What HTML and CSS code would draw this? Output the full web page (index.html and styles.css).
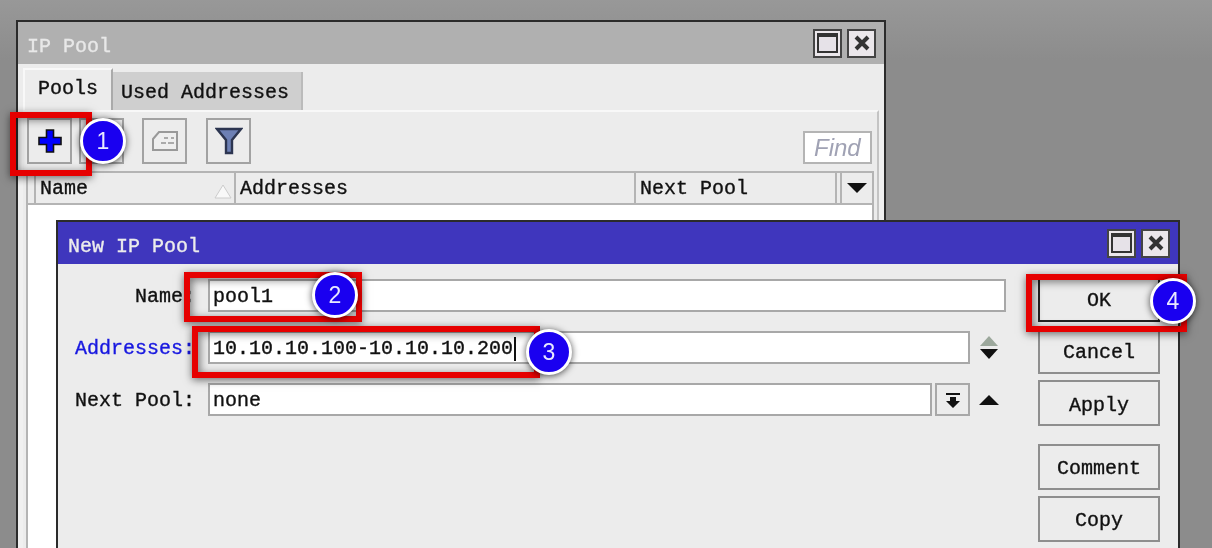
FILE: index.html
```html
<!DOCTYPE html>
<html lang="en">
<head>
  <meta charset="UTF-8">
  <meta name="viewport" content="width=device-width, initial-scale=1.0">
  <title>New IP Pool</title>
  <link rel="stylesheet" href="styles.css">
</head>
<body>
  <div class="desktop">

    <!-- IP Pool list window -->
    <section class="window pool-window">
      <header class="titlebar">
        <span class="title">IP Pool</span>
        <div class="win-buttons">
          <button class="win-btn"><span class="max-glyph"></span></button>
          <button class="win-btn">
            <svg width="18" height="18" viewBox="0 0 18 18"><path d="M3 3 L15 15 M15 3 L3 15" stroke="#333" stroke-width="4"/></svg>
          </button>
        </div>
      </header>

      <div class="tabs">
        <div class="tab active">Pools</div>
        <div class="tab">Used Addresses</div>
      </div>

      <div class="pane">
        <div class="toolbar">
          <button class="tool">
            <svg width="26" height="26" viewBox="0 0 26 26"><path d="M9.5 2 H16.5 V9.5 H24 V16.5 H16.5 V24 H9.5 V16.5 H2 V9.5 H9.5 Z" fill="#0000ff" stroke="#111" stroke-width="1.6"/></svg>
          </button>
          <button class="tool"></button>
          <button class="tool tool-gap">
            <svg width="28" height="24" viewBox="0 0 28 24"><path d="M2 10 L8 3 H26 V21 H2 Z" fill="#eee" stroke="#999" stroke-width="2"/><path d="M13 9 H17 M20 9 H23 M10 14 H15 M17 14 H23" stroke="#aaa" stroke-width="2"/></svg>
          </button>
          <button class="tool tool-gap-wide">
            <svg width="28" height="30" viewBox="0 0 28 30"><path d="M2 3 H26 L17 14 V27 H11 V14 Z" fill="#6d80b4" stroke="#2c3550" stroke-width="2.4"/></svg>
          </button>
          <div class="find">Find</div>
        </div>

        <div class="table">
          <div class="table-head">
            <div class="col col-stub"></div>
            <div class="col col-sort">Name
              <svg class="sort-mark" width="18" height="15" viewBox="0 0 18 15"><path d="M9 1 L17 14 H1 Z" fill="#f8f8f8" stroke="#ccc"/></svg>
            </div>
            <div class="col">Addresses</div>
            <div class="col">Next Pool</div>
            <div class="col"></div>
            <div class="col col-arrow">
              <svg width="20" height="10" viewBox="0 0 20 10"><path d="M0 0 H20 L10 10 Z" fill="#111"/></svg>
            </div>
          </div>
          <div class="table-body"></div>
        </div>
      </div>
    </section>

    <!-- New IP Pool dialog -->
    <section class="window pool-dialog">
      <header class="titlebar titlebar-active">
        <span class="title">New IP Pool</span>
        <div class="win-buttons">
          <button class="win-btn"><span class="max-glyph"></span></button>
          <button class="win-btn">
            <svg width="18" height="18" viewBox="0 0 18 18"><path d="M3 3 L15 15 M15 3 L3 15" stroke="#333" stroke-width="4"/></svg>
          </button>
        </div>
      </header>

      <div class="dialog-body">
        <div class="form">
          <div class="row">
            <label class="label">Name:</label>
            <div class="field">pool1</div>
          </div>
          <div class="row">
            <label class="label label-blue">Addresses:</label>
            <div class="field field-short">10.10.10.100-10.10.10.200<span class="caret"></span></div>
            <div class="side-arrows">
              <svg width="20" height="24" viewBox="0 0 20 24"><path d="M10 0 L19 10 H1 Z" fill="#9ca89c"/><path d="M1 13 H19 L10 23 Z" fill="#111"/></svg>
            </div>
          </div>
          <div class="row">
            <label class="label">Next Pool:</label>
            <div class="field field-select">none</div>
            <button class="drop-btn">
              <svg width="16" height="16" viewBox="0 0 16 16"><path d="M1 1 H15 V3 H1 Z M5 5 H11 V9 H15 L8 16 L1 9 H5 Z" fill="#111"/></svg>
            </button>
            <div class="side-arrows">
              <svg width="20" height="10" viewBox="0 0 20 10"><path d="M10 0 L20 10 H0 Z" fill="#111"/></svg>
            </div>
          </div>
        </div>

        <div class="actions">
          <button class="btn btn-default">OK</button>
          <button class="btn">Cancel</button>
          <button class="btn btn-low">Apply</button>
          <button class="btn btn-gap">Comment</button>
          <button class="btn">Copy</button>
          <button class="btn"></button>
        </div>
      </div>
    </section>

    <!-- Red callouts over the screenshot -->
    <div class="callout callout-1"></div>
    <div class="callout callout-2"></div>
    <div class="callout callout-3"></div>
    <div class="callout callout-4"></div>
    <div class="badge badge-1">1</div>
    <div class="badge badge-2">2</div>
    <div class="badge badge-3">3</div>
    <div class="badge badge-4">4</div>

  </div>
</body>
</html>
```

FILE: styles.css
```css
/* General Styling */
html, body {
  margin: 0;
  height: 100%;
  overflow: hidden;
}

body {
  background: #8e8e8e;
}

.desktop {
  position: relative;
  width: 1212px;
  height: 548px;
  overflow: hidden;
  background: linear-gradient(#989898, #8c8c8c 60px);
  font-family: "Liberation Mono", monospace;
  font-size: 20px;
  color: #111;
  -webkit-text-stroke: 0.35px currentColor;
  filter: blur(0.45px);
}

button {
  font-family: inherit;
  font-size: inherit;
  color: inherit;
  padding: 0;
}

/* Windows */
.window {
  position: absolute;
  box-sizing: border-box;
  border: 2px solid #2b2b2b;
  background: #ececec;
}

.pool-window {
  left: 16px;
  top: 20px;
  width: 870px;
  height: 600px;
  background: #f0f0f0;
}

.pool-dialog {
  left: 56px;
  top: 220px;
  width: 1124px;
  height: 345px;
}

.titlebar {
  display: flex;
  align-items: center;
  justify-content: space-between;
  height: 42px;
  padding: 0 8px 0 9px;
  background: #b0b0b0;
  color: #e8e8e8;
}

.titlebar-active {
  padding-left: 10px;
  background: #3f36bd;
  color: #ececec;
}

.title {
  padding-top: 6px;
}

.win-buttons {
  display: flex;
  gap: 5px;
}

.win-btn {
  display: flex;
  align-items: center;
  justify-content: center;
  box-sizing: border-box;
  width: 29px;
  height: 29px;
  border: 2px solid #444;
  background: #ebe7eb;
}

.max-glyph {
  box-sizing: border-box;
  width: 21px;
  height: 20px;
  border: 2px solid #333;
  border-top-width: 4px;
  background: #e6e2e8;
}

/* Tabs */
.tabs {
  display: flex;
  align-items: flex-end;
  height: 46px;
  padding-left: 5px;
  background: #ececec;
}

.tab {
  box-sizing: border-box;
  height: 38px;
  padding: 9px 12px 0 8px;
  background: #cfcfcf;
  border-right: 2px solid #bbb;
}

.tab.active {
  height: 42px;
  width: 90px;
  padding: 7px 0 0 13px;
  background: #ececec;
  border-top: 2px solid #f8f8f8;
  border-left: 2px solid #f8f8f8;
  border-right: 2px solid #aaa;
}

.pane {
  margin: 0 5px;
  border-top: 2px solid #f8f8f8;
  border-right: 2px solid #c4c4c4;
  background: #ececec;
  height: 500px;
}

.toolbar {
  display: flex;
  padding: 6px 5px 7px 4px;
  gap: 7px;
}

.tool {
  display: flex;
  align-items: center;
  justify-content: center;
  box-sizing: border-box;
  width: 45px;
  height: 46px;
  border: 2px solid #a2a2a2;
  background: #ececec;
}

.tool-gap {
  margin-left: 11px;
}

.tool-gap-wide {
  margin-left: 12px;
}

.find {
  box-sizing: border-box;
  align-self: flex-end;
  width: 69px;
  height: 33px;
  margin-left: auto;
  padding-left: 9px;
  border: 2px solid #b4b4b4;
  background: #fff;
  font-family: "Liberation Sans", sans-serif;
  font-style: italic;
  font-size: 24px;
  line-height: 29px;
  color: #a0a2b4;
  -webkit-text-stroke: 0;
}

/* List table */
.table {
  width: 848px;
  margin-left: 3px;
  box-sizing: border-box;
  border-left: 2px solid #b4b4b4;
  border-right: 2px solid #b4b4b4;
}

.table-head {
  display: grid;
  grid-template-columns: 6px 200px 400px 201px 5px 32px;
  height: 34px;
  box-sizing: border-box;
  border-top: 2px solid #b4b4b4;
  border-bottom: 2px solid #b4b4b4;
}

.col {
  display: flex;
  align-items: center;
  justify-content: space-between;
  box-sizing: border-box;
  padding: 0 4px;
  border-left: 2px solid #b4b4b4;
  white-space: nowrap;
}

.col-stub {
  border-left: 0;
}

.col-sort {
  padding: 0 2px 0 4px;
}

.sort-mark {
  margin-top: 6px;
}

.col-arrow {
  justify-content: center;
}

.table-body {
  height: 400px;
  background: #fff;
}

/* Dialog form */
.dialog-body {
  display: flex;
  align-items: flex-start;
  gap: 32px;
  padding-right: 18px;
}

.form {
  display: flex;
  flex-direction: column;
  gap: 19px;
  width: 948px;
  padding-top: 15px;
}

.row {
  display: flex;
  align-items: center;
  height: 33px;
}

.label {
  width: 137px;
  margin-right: 13px;
  padding-top: 2px;
  text-align: right;
}

.label-blue {
  color: #1818e0;
}

.field {
  flex: 1;
  box-sizing: border-box;
  height: 33px;
  padding-left: 3px;
  border: 2px solid #a8a8a8;
  background: #fff;
  line-height: 32px;
  white-space: nowrap;
}

.field-short {
  flex: none;
  width: 762px;
}

.field-select {
  flex: none;
  width: 724px;
}

.caret {
  display: inline-block;
  width: 2px;
  height: 24px;
  margin-left: 1px;
  vertical-align: middle;
  background: #111;
}

.drop-btn {
  display: flex;
  align-items: center;
  justify-content: center;
  box-sizing: border-box;
  width: 35px;
  height: 33px;
  margin-left: 3px;
  border: 2px solid #a8a8a8;
  background: #ececec;
}

.side-arrows {
  display: flex;
  align-items: center;
  margin-left: 9px;
}

/* Dialog buttons */
.actions {
  display: flex;
  flex-direction: column;
  gap: 6px;
  width: 122px;
  padding-top: 12px;
}

.btn {
  box-sizing: border-box;
  flex: none;
  height: 46px;
  padding-top: 2px;
  border: 2px solid #8e8e8e;
  background: #ececec;
}

.btn-low {
  padding-top: 4px;
}

.btn-default {
  border-color: #222;
}

.btn-gap {
  margin-top: 12px;
}

/* Callouts */
.callout {
  position: absolute;
  box-sizing: border-box;
  border: 6px solid #e60000;
  box-shadow: 0 2px 8px rgba(0, 0, 0, 0.55), inset 2px 2px 8px rgba(0, 0, 0, 0.5);
}

.callout-1 {
  left: 10px;
  top: 112px;
  width: 82px;
  height: 64px;
}

.callout-2 {
  left: 184px;
  top: 272px;
  width: 178px;
  height: 50px;
}

.callout-3 {
  left: 192px;
  top: 326px;
  width: 348px;
  height: 52px;
}

.callout-4 {
  left: 1026px;
  top: 274px;
  width: 161px;
  height: 58px;
}

.badge {
  position: absolute;
  display: flex;
  align-items: center;
  justify-content: center;
  box-sizing: border-box;
  width: 46px;
  height: 46px;
  border: 3px solid #fff;
  border-radius: 50%;
  background: #1a00f0;
  box-shadow: 0 1px 7px rgba(0, 0, 0, 0.7);
  color: #e8e8ff;
  font-family: "Liberation Sans", sans-serif;
  font-size: 23px;
  -webkit-text-stroke: 0;
}

.badge-1 {
  left: 80px;
  top: 118px;
}

.badge-2 {
  left: 312px;
  top: 272px;
}

.badge-3 {
  left: 526px;
  top: 329px;
}

.badge-4 {
  left: 1150px;
  top: 278px;
}
```
